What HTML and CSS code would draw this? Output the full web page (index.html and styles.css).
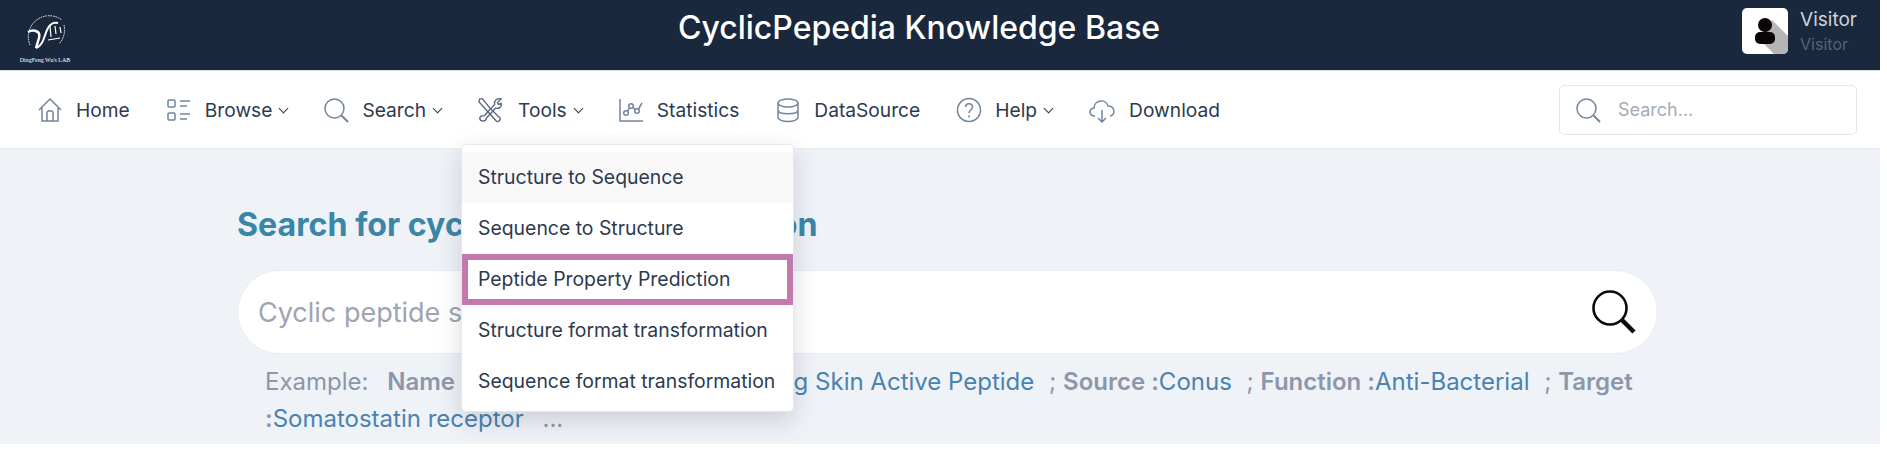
FILE: index.html
```html
<!DOCTYPE html>
<html lang="en">
<head>
    <meta charset="UTF-8">
    <title>CyclicPepedia Knowledge Base</title>
    <link rel="stylesheet" href="styles.css">
</head>
<body>

<div class="page">
    <div class="header">
        <div class="logo">
            <svg width="50" height="46" viewBox="0 0 46 46" fill="none" stroke="#fff">
                <path d="M8 34A21 21 0 0 1 40 9" stroke-width="1" stroke-dasharray="1.5 1"/>
                <path d="M42 14A21 21 0 0 1 37 33" stroke-width="1" stroke-dasharray="1.5 1"/>
                <path d="M6 21C12 18 19 20 17 27L14 37" stroke-width="2.5"/>
                <path d="M14 37C22 34 22 24 26 17C28 13 32 11 36 12" stroke-width="2"/>
                <path d="M28 15L29 26M33 15L34 23M38 16L39 22" stroke-width="1.2"/>
                <path d="M26 29L38 27" stroke-width="1.2"/>
            </svg>
            <span class="logo-text">DingFeng Wu's LAB</span>
        </div>
        <div class="site-title">CyclicPepedia Knowledge Base</div>
        <div class="user">
            <div class="avatar">
                <svg width="46" height="46" viewBox="0 0 46 46">
                    <path d="M16 30L32 46H46V28L30 12Z" fill="#b5b5b5"/>
                    <circle cx="23" cy="17" r="7" fill="#0a0606"/>
                    <rect x="13" y="24" width="20" height="12" rx="5" fill="#0a0606"/>
                </svg>
            </div>
            <div class="user-names">
                <div class="user-name">Visitor</div>
                <div class="user-role">Visitor</div>
            </div>
        </div>
    </div>

    <div class="nav">
        <a class="nav-item">
            <svg class="icon" width="26" height="26" viewBox="0 0 26 26"><path d="M2 13L13 2L24 13M5 11V24H21V11M10 24V16C10 13 16 13 16 16V24"/></svg>
            Home
        </a>
        <a class="nav-item">
            <svg class="icon" width="26" height="26" viewBox="0 0 26 26"><rect x="2" y="3" width="7" height="7" rx="1"/><rect x="2" y="16" width="7" height="7" rx="1"/><path d="M14 4H24M14 9H21M14 17H24M14 22H21"/></svg>
            Browse <span class="caret"></span>
        </a>
        <a class="nav-item">
            <svg class="icon" width="26" height="26" viewBox="0 0 26 26"><circle cx="11.5" cy="11.5" r="9.5"/><path d="M18.5 18.5L25 25" stroke-width="2"/></svg>
            Search <span class="caret"></span>
        </a>
        <a class="nav-item">
            <svg class="icon icon-dark" width="26" height="28" viewBox="0 0 28 28"><path d="M3 2L6 2L14 12L25 23C25 27 21 27 20 25L11 15L2 5Z"/><path d="M8 20L19 8C18 4 21 1 26 2L22 6L23 8L26 7C27 11 23 13 20 12L10 23C10 27 3 27 3 23C3 20 6 20 8 20Z"/></svg>
            Tools <span class="caret"></span>
        </a>
        <a class="nav-item">
            <svg class="icon" width="26" height="26" viewBox="0 0 26 26"><path d="M2 2V24H25"/><circle cx="8" cy="16" r="2.3"/><circle cx="13" cy="9" r="2.3"/><circle cx="19" cy="14" r="2.3"/><path d="M9.5 14L11.7 11M15 10.5L17.3 12.7M20.5 12L24 6"/></svg>
            Statistics
        </a>
        <a class="nav-item">
            <svg class="icon" width="26" height="26" viewBox="0 0 26 26"><ellipse cx="13" cy="6" rx="10" ry="4"/><path d="M3 6V20C3 26 23 26 23 20V6M3 13C3 18 23 18 23 13"/></svg>
            DataSource
        </a>
        <a class="nav-item">
            <svg class="icon" width="26" height="26" viewBox="0 0 26 26"><circle cx="13" cy="13" r="11.5"/><path d="M9.5 10C9.5 5.5 16.5 5.5 16.5 10C16.5 13 13 13 13 16M13 18.5V20.5"/></svg>
            Help <span class="caret"></span>
        </a>
        <a class="nav-item">
            <svg class="icon" width="28" height="26" viewBox="0 0 28 26"><path d="M7 19C1 19 0 12 6 11C6 3 18 1 20 9C27 9 28 18 22 19M14 13V25M10 21L14 25L18 21"/></svg>
            Download
        </a>
        <div class="nav-search">
            <svg class="icon" width="26" height="26" viewBox="0 0 26 26"><circle cx="11.5" cy="11.5" r="9.5"/><path d="M18.5 18.5L25 25" stroke-width="2"/></svg>
            <span class="nav-search-text">Search...</span>
        </div>
    </div>

    <div class="main">
        <h1 class="main-title">Search for cyclic peptide information</h1>
        <div class="search-bar">
            <span class="search-placeholder">Cyclic peptide sequence</span>
            <svg class="search-icon" width="46" height="46" viewBox="0 0 46 46" fill="none" stroke="#0a0a0a"><circle cx="19" cy="19" r="16.5" stroke-width="2.6"/><path d="M31 31L43 43" stroke-width="4.5"/></svg>
        </div>
        <div class="examples">
            <span class="label example-word">Example:</span>
            <b class="label">Name :</b><a>Cyclic Antimicrobial Tree Frog Skin Active Peptide</a>
            <span class="label sep">;</span> <b class="label">Source :</b><a>Conus</a>
            <span class="label sep">;</span> <b class="label">Function :</b><a>Anti-Bacterial</a>
            <span class="label sep">;</span> <b class="label">Target :</b><a>Somatostatin receptor</a>
            <span class="label more">...</span>
        </div>

        <div class="dropdown">
            <div class="dropdown-item first">Structure to Sequence</div>
            <div class="dropdown-item">Sequence to Structure</div>
            <div class="dropdown-item marked">Peptide Property Prediction</div>
            <div class="dropdown-item">Structure format transformation</div>
            <div class="dropdown-item">Sequence format transformation</div>
        </div>
    </div>
</div>

</body>
</html>
```

FILE: styles.css
```css
body {
    font-family: Inter, "Liberation Sans", sans-serif;
    background-color: #ffffff;
    margin: 0;
    padding: 0;
    color: #2c3a50;
    overflow: hidden;
}
.page {
    width: 1880px;
}
.header {
    height: 71px;
    background-color: #1a283d;
    display: flex;
    align-items: flex-start;
    justify-content: space-between;
    padding: 8px 23px 0 18px;
    box-sizing: border-box;
    border-bottom: 1px solid #d5dde3;
}
.logo {
    width: 54px;
    display: flex;
    flex-direction: column;
    align-items: center;
    margin-top: 3px;
}
.logo-text {
    font-family: "Liberation Serif", serif;
    font-size: 6px;
    color: #fff;
    white-space: nowrap;
}
.site-title {
    font-size: 32px;
    font-weight: 500;
    color: #ffffff;
    margin-left: 24px;
    margin-top: 0;
}
.user {
    display: flex;
    align-items: center;
    gap: 12px;
}
.avatar {
    width: 46px;
    height: 46px;
    background-color: #fff;
    border-radius: 5px;
    overflow: hidden;
}
.avatar svg {
    display: block;
}
.user-name {
    font-size: 19px;
    color: #cfd3da;
}
.user-role {
    font-size: 16px;
    color: #55637a;
    margin-top: 3px;
}
.nav {
    height: 78px;
    display: flex;
    align-items: center;
    padding: 0 23px 0 37px;
    box-sizing: border-box;
    border-bottom: 1px solid #e8ebf0;
    background-color: #fff;
}
.nav-item {
    display: flex;
    align-items: center;
    font-size: 19.2px;
    color: #2c3a50;
    margin-right: 36px;
    white-space: nowrap;
}
.icon {
    fill: none;
    stroke: #71859f;
    stroke-width: 1.5;
    margin-right: 13px;
}
.icon-dark {
    stroke: #55677f;
    margin-right: 15px;
}
.caret {
    width: 6px;
    height: 6px;
    border-right: 1.5px solid #2c3a50;
    border-bottom: 1.5px solid #2c3a50;
    transform: rotate(45deg);
    margin: -3px 0 0 8px;
}
.nav-search {
    margin-left: auto;
    width: 298px;
    height: 50px;
    box-sizing: border-box;
    border: 1px solid #e2e5ea;
    border-radius: 5px;
    display: flex;
    align-items: center;
    padding-left: 15px;
    font-size: 18px;
    color: #a4abb8;
}
.nav-search .icon {
    margin-right: 17px;
}
.main {
    height: 295px;
    box-sizing: border-box;
    background-color: #eff2f7;
    padding: 56px 222px 0 237px;
    position: relative;
}
.main-title {
    font-size: 32.2px;
    font-weight: 700;
    color: #3a86a8;
    margin: 0 0 25px 0;
    line-height: 40px;
}
.search-bar {
    height: 84px;
    box-sizing: border-box;
    background-color: #fff;
    border: 1px solid #e8ebf0;
    border-radius: 42px;
    display: flex;
    align-items: center;
    justify-content: space-between;
    padding: 0 20px;
}
.search-placeholder {
    font-size: 27px;
    color: #9ea4b0;
}
.examples {
    font-size: 24px;
    line-height: 37px;
    color: #4a82b0;
    padding: 9px 0 0 28px;
}
.label {
    color: #8c97ab;
}
b.label {
    font-weight: 600;
}
.example-word {
    margin-right: 12px;
}
.sep {
    margin-left: 8px;
}
.more {
    margin-left: 12px;
}
.dropdown {
    position: absolute;
    left: 461px;
    top: -5px;
    width: 333px;
    height: 268px;
    box-sizing: border-box;
    padding-top: 7px;
    background-color: #fff;
    border-radius: 5px;
    border: 1px solid #e6e8ec;
    box-shadow: 0 8px 24px rgba(40, 50, 70, 0.18);
    display: flex;
    flex-direction: column;
}
.dropdown-item {
    height: 51px;
    box-sizing: border-box;
    padding-left: 16px;
    font-size: 19.4px;
    line-height: 51px;
    color: #2c3a50;
    white-space: nowrap;
}
.first {
    background-color: #f8f8f9;
}
.marked {
    border: 6px solid #c479ae;
    padding-left: 10px;
    line-height: 39px;
}
```
